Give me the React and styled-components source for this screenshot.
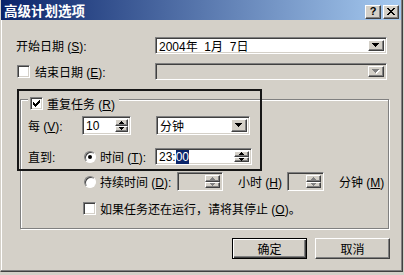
import React from 'react';
import styled, { css, createGlobalStyle } from 'styled-components';

const GlobalStyle = createGlobalStyle`
  body {
    margin: 0;
    background: #d4d0c8;
    font-family: "Liberation Sans", "Noto Sans CJK SC", sans-serif;
    font-size: 12px;
    color: #000;
  }
`;

const sunken = css`
  box-sizing: border-box;
  border: 1px solid;
  border-color: #808080 #fff #fff #808080;
  box-shadow: inset 1px 1px #404040, inset -1px -1px #d4d0c8;
`;

const raised = css`
  box-sizing: border-box;
  border: 1px solid;
  border-color: #fff #404040 #404040 #fff;
  box-shadow: inset -1px -1px #808080, inset 1px 1px #d4d0c8;
  background: #d4d0c8;
`;

const Screen = styled.div`
  width: 404px;
  height: 275px;
  overflow: hidden;
  background: #d4d0c8;
`;

const Dialog = styled.div`
  position: relative;
  box-sizing: border-box;
  width: 403px;
  height: 272px;
  border-left: 1px solid #d4d0c8;
  border-right: 1px solid #404040;
  border-bottom: 1px solid #404040;
  box-shadow: inset -1px -1px #808080, inset 1px 0 #fff;
`;

const TitleBar = styled.div`
  height: 20px;
  margin-right: 1px;
  padding: 0 2px 0 3px;
  display: flex;
  align-items: center;
  background: linear-gradient(to right, #0a246a, #a6caf0);
`;

const TitleText = styled.span`
  flex: 1;
  color: #fff;
  font-family: "Noto Sans CJK SC", sans-serif;
  font-weight: bold;
  font-size: 13.5px;
  line-height: 20px;
`;

const CaptionButtons = styled.div`
  display: flex;
  gap: 2px;
  margin-top: 3px;
`;

const CaptionButton = styled.div`
  ${raised};
  width: 16px;
  height: 14px;
  display: flex;
  align-items: center;
  justify-content: center;
  font-family: "Liberation Sans", sans-serif;
  font-weight: bold;
  font-size: 11px;
  line-height: 1;
`;

const Body = styled.div`
  padding-top: 17px;
  display: flex;
  flex-direction: column;
`;

const FormRow = styled.div`
  display: flex;
  align-items: center;
  height: ${(p) => p.$h || 17}px;
  margin-top: ${(p) => p.$mt || 0}px;
  padding-left: ${(p) => p.$pl || 0}px;
`;

const Label = styled.span`
  display: flex;
  align-items: center;
  width: ${(p) => (p.$w ? `${p.$w}px` : 'auto')};
  margin-left: ${(p) => p.$ml || 0}px;
  flex-shrink: 0;
  white-space: nowrap;
  gap: ${(p) => p.$gap || 0}px;
`;

const Text = styled.span`
  white-space: nowrap;
`;

const Combo = styled.div`
  ${sunken};
  width: ${(p) => p.$w}px;
  height: ${(p) => p.$h || 17}px;
  margin-left: ${(p) => p.$ml || 0}px;
  padding: 2px;
  display: flex;
  align-items: stretch;
  background: ${(p) => (p.$disabled ? '#d4d0c8' : '#fff')};
`;

const FieldText = styled.span`
  flex: 1;
  padding-left: 1px;
  display: flex;
  align-items: center;
  white-space: pre;
  font-size: 12px;
`;

const DropButton = styled.div`
  ${raised};
  width: 16px;
  display: flex;
  align-items: center;
  justify-content: center;
`;

const SpinCol = styled.div`
  width: ${(p) => p.$w}px;
  display: flex;
  flex-direction: column;
`;

const SpinButton = styled.div`
  ${raised};
  flex: 1;
  display: flex;
  align-items: center;
  justify-content: center;
`;

const Selected = styled.span`
  background: #0a246a;
  color: #fff;
`;

const Box = styled.div`
  ${sunken};
  width: 13px;
  height: 13px;
  flex-shrink: 0;
  background: #fff;
  display: flex;
  align-items: center;
  justify-content: center;
`;

const Radio = styled.div`
  box-sizing: border-box;
  width: 12px;
  height: 12px;
  flex-shrink: 0;
  border-radius: 50%;
  border: 1px solid;
  border-color: #808080 #fff #fff #808080;
  box-shadow: inset 1px 1px #404040;
  background: #fff;
  display: flex;
  align-items: center;
  justify-content: center;
`;

const Dot = styled.div`
  width: 4px;
  height: 4px;
  border-radius: 50%;
  background: #000;
`;

const Group = styled.div`
  box-sizing: border-box;
  margin: 19px 0 0 19px;
  width: 369px;
  height: 130px;
  border: 1px solid #808080;
  box-shadow: inset 1px 1px #fff, 1px 1px #fff;
  display: flex;
  flex-direction: column;
`;

const Legend = styled.div`
  align-self: flex-start;
  display: flex;
  align-items: center;
  gap: 4px;
  height: 13px;
  margin: -3px 0 0 7px;
  padding: 0 4px 0 2px;
  background: #d4d0c8;
  white-space: nowrap;
`;

const ButtonRow = styled.div`
  display: flex;
  gap: 8px;
  margin: 9px 0 0 231px;
`;

const PushButton = styled.div`
  ${raised};
  width: 75px;
  height: 21px;
  display: flex;
  align-items: center;
  justify-content: center;
  ${(p) =>
    p.$default &&
    css`
      border-color: #000;
      box-shadow: inset 1px 1px #fff, inset -1px -1px #404040, inset -2px -2px #808080;
    `}
`;

const Marker = styled.div`
  position: absolute;
  left: 16px;
  top: 89px;
  width: 245px;
  height: 82px;
  box-sizing: border-box;
  border: 2px solid #161616;
  pointer-events: none;
`;

const DownArrow = ({ disabled }) => (
  <svg width="8" height="5" viewBox="0 0 8 5" shapeRendering="crispEdges">
    {disabled && (
      <g fill="#fff">
        <rect x="1" y="1" width="7" height="1" />
        <rect x="2" y="2" width="5" height="1" />
        <rect x="3" y="3" width="3" height="1" />
        <rect x="4" y="4" width="1" height="1" />
      </g>
    )}
    <g fill={disabled ? '#808080' : '#000'}>
      <rect x="0" y="0" width="7" height="1" />
      <rect x="1" y="1" width="5" height="1" />
      <rect x="2" y="2" width="3" height="1" />
      <rect x="3" y="3" width="1" height="1" />
    </g>
  </svg>
);

const TinyArrow = ({ up, disabled }) => (
  <svg width="5" height="3" viewBox="0 0 5 3" shapeRendering="crispEdges" fill={disabled ? '#808080' : '#000'}>
    {up ? (
      <>
        <rect x="2" y="0" width="1" height="1" />
        <rect x="1" y="1" width="3" height="1" />
        <rect x="0" y="2" width="5" height="1" />
      </>
    ) : (
      <>
        <rect x="0" y="0" width="5" height="1" />
        <rect x="1" y="1" width="3" height="1" />
        <rect x="2" y="2" width="1" height="1" />
      </>
    )}
  </svg>
);

const Check = () => (
  <svg width="7" height="7" viewBox="0 0 7 7" shapeRendering="crispEdges" fill="#000">
    <rect x="6" y="0" width="1" height="3" />
    <rect x="5" y="1" width="1" height="3" />
    <rect x="4" y="2" width="1" height="3" />
    <rect x="3" y="3" width="1" height="3" />
    <rect x="2" y="4" width="1" height="3" />
    <rect x="1" y="3" width="1" height="3" />
    <rect x="0" y="2" width="1" height="3" />
  </svg>
);

const CloseGlyph = () => (
  <svg width="8" height="7" viewBox="0 0 8 7" shapeRendering="crispEdges" fill="#000">
    <rect x="0" y="0" width="2" height="1" /><rect x="6" y="0" width="2" height="1" />
    <rect x="1" y="1" width="2" height="1" /><rect x="5" y="1" width="2" height="1" />
    <rect x="2" y="2" width="4" height="1" />
    <rect x="3" y="3" width="2" height="1" />
    <rect x="2" y="4" width="4" height="1" />
    <rect x="1" y="5" width="2" height="1" /><rect x="5" y="5" width="2" height="1" />
    <rect x="0" y="6" width="2" height="1" /><rect x="6" y="6" width="2" height="1" />
  </svg>
);

const Spin = ({ w, h, btnW, disabled, children }) => (
  <Combo $w={w} $h={h} $disabled={disabled}>
    <FieldText>{children}</FieldText>
    <SpinCol $w={btnW}>
      <SpinButton><TinyArrow up disabled={disabled} /></SpinButton>
      <SpinButton><TinyArrow disabled={disabled} /></SpinButton>
    </SpinCol>
  </Combo>
);

const Mn = ({ children }) => <u>{children}</u>;

export default function App() {
  return (
    <Screen>
      <GlobalStyle />
      <Dialog>
        <TitleBar>
          <TitleText>高级计划选项</TitleText>
          <CaptionButtons>
            <CaptionButton>?</CaptionButton>
            <CaptionButton><CloseGlyph /></CaptionButton>
          </CaptionButtons>
        </TitleBar>

        <Body>
          <FormRow $pl={15}>
            <Label $w={139}><Text>开始日期 (<Mn>S</Mn>):</Text></Label>
            <Combo $w={232}>
              <FieldText>2004年  1月  7日</FieldText>
              <DropButton><DownArrow /></DropButton>
            </Combo>
          </FormRow>

          <FormRow $pl={16} $mt={9}>
            <Label $w={138} $gap={5}>
              <Box />
              <Text>结束日期 (<Mn>E</Mn>):</Text>
            </Label>
            <Combo $w={232} $disabled>
              <FieldText />
              <DropButton><DownArrow disabled /></DropButton>
            </Combo>
          </FormRow>

          <Group>
            <Legend>
              <Box><Check /></Box>
              <Text>重复任务 (<Mn>R</Mn>)</Text>
            </Legend>

            <FormRow $pl={7} $mt={6} $h={19}>
              <Label $w={54}><Text>每 (<Mn>V</Mn>):</Text></Label>
              <Spin w={49} h={19} btnW={13}>10</Spin>
              <Combo $w={94} $h={19} $ml={25}>
                <FieldText>分钟</FieldText>
                <DropButton><DownArrow /></DropButton>
              </Combo>
            </FormRow>

            <FormRow $pl={7} $mt={13} $h={17}>
              <Label $w={56}><Text>直到:</Text></Label>
              <Label $w={71} $gap={4}>
                <Radio><Dot /></Radio>
                <Text>时间 (<Mn>T</Mn>):</Text>
              </Label>
              <Spin w={97} h={17} btnW={15}>
                23:<Selected>00</Selected>
              </Spin>
            </FormRow>

            <FormRow $pl={63} $mt={7} $h={19}>
              <Label $w={93} $gap={4}>
                <Radio />
                <Text>持续时间 (<Mn>D</Mn>):</Text>
              </Label>
              <Spin w={46} h={19} btnW={15} disabled />
              <Label $w={49} $ml={15}><Text>小时 (<Mn>H</Mn>)</Text></Label>
              <Spin w={37} h={19} btnW={15} disabled />
              <Label $ml={15}><Text>分钟 (<Mn>M</Mn>)</Text></Label>
            </FormRow>

            <FormRow $pl={62} $mt={11} $h={13}>
              <Label $gap={4}>
                <Box />
                <Text>如果任务还在运行，请将其停止 (<Mn>O</Mn>)。</Text>
              </Label>
            </FormRow>
          </Group>

          <ButtonRow>
            <PushButton $default>确定</PushButton>
            <PushButton>取消</PushButton>
          </ButtonRow>
        </Body>

        <Marker />
      </Dialog>
    </Screen>
  );
}
